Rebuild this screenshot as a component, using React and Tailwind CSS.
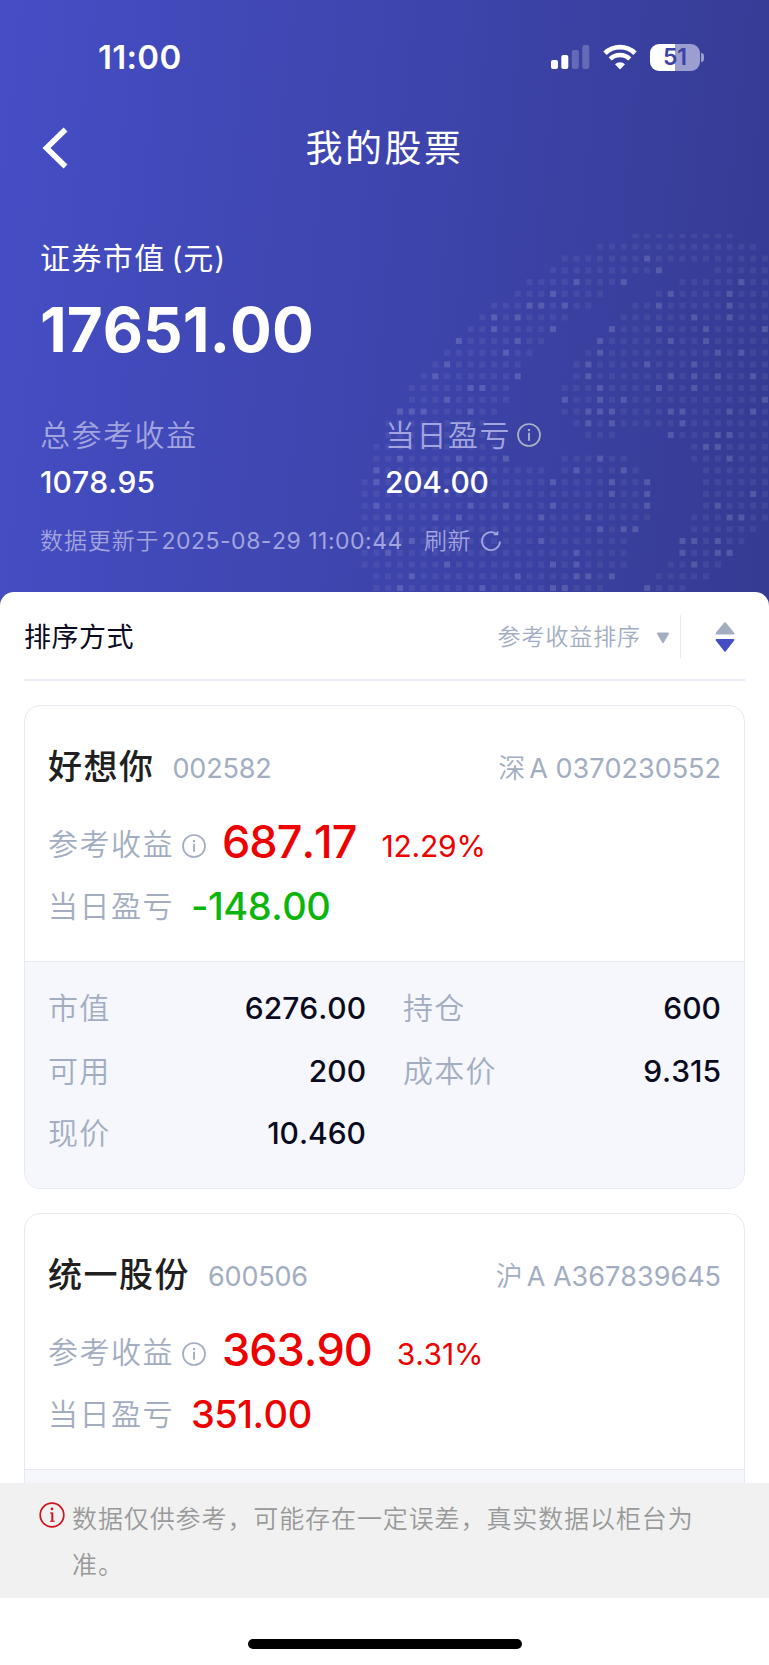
// Each row lists the [from, to] column runs and the highlighted columns.
const DOT_ROWS = [
  { runs: [[23, 31]], lit: [] },
  { runs: [[20, 33]], lit: [] },
  { runs: [[17, 34]], lit: [24] },
  { runs: [[16, 25], [30, 34]], lit: [25] },
  { runs: [[14, 22], [27, 34]], lit: [18, 22, 32] },
  { runs: [[13, 20], [25, 34]], lit: [16, 26, 31] },
  { runs: [[11, 19], [23, 34]], lit: [14, 15, 17, 25, 31] },
  { runs: [[10, 17], [22, 34]], lit: [11, 13, 28, 31] },
  { runs: [[9, 16], [21, 34]], lit: [11, 16, 21, 25, 29, 34] },
  { runs: [[8, 15], [20, 34]], lit: [8, 13, 20, 26, 29] },
  { runs: [[7, 14], [19, 34]], lit: [12, 20, 30, 32] },
  { runs: [[6, 13], [18, 34]], lit: [7, 19, 24, 28] },
  { runs: [[5, 13], [18, 34]], lit: [6, 13, 19, 26, 28, 30, 33] },
  { runs: [[4, 12], [17, 34]], lit: [9, 10, 20, 25, 28] },
  { runs: [[4, 12], [17, 34]], lit: [7, 17, 20, 22, 34] },
  { runs: [[3, 11], [17, 34]], lit: [3, 4, 5, 9, 19, 20, 21, 26, 27, 31, 33] },
  { runs: [[2, 10], [18, 34]], lit: [19, 21, 27] },
  { runs: [[2, 11], [19, 21], [26, 34]], lit: [26, 30, 31] },
  { runs: [[1, 11], [28, 34]], lit: [29, 30] },
  { runs: [[1, 12], [17, 22], [28, 34]], lit: [3, 8, 12, 20, 31] },
  { runs: [[1, 15], [17, 23], [29, 34]], lit: [1, 18, 22] },
  { runs: [[0, 24], [29, 34]], lit: [1, 16, 21, 24] },
  { runs: [[0, 24], [29, 34]], lit: [21, 24, 33] },
  { runs: [[0, 24], [29, 34]], lit: [1, 9, 12, 16, 24, 30] },
  { runs: [[0, 24], [28, 34]], lit: [2, 6, 8, 15, 19, 31, 32] },
  { runs: [[0, 23], [28, 33]], lit: [20, 22, 23] },
  { runs: [[0, 22], [27, 32]], lit: [4, 15, 27, 28, 30] },
  { runs: [[0, 22], [27, 31]], lit: [2, 18, 27, 30, 31] },
  { runs: [[0, 22], [26, 30]], lit: [7, 16, 18, 28] },
  { runs: [[1, 21], [25, 29]], lit: [4, 13, 18, 19, 21] },
  { runs: [[1, 20], [24, 27]], lit: [3, 10, 16, 17, 24] },
];

const STOCKS = [
  {
    name: "好想你",
    code: "002582",
    market: "深",
    account: "A 0370230552",
    profit: "687.17",
    rate: "12.29%",
    today: "-148.00",
    details: [
      ["市值", "6276.00"],
      ["持仓", "600"],
      ["可用", "200"],
      ["成本价", "9.315"],
      ["现价", "10.460"],
    ],
  },
  {
    name: "统一股份",
    code: "600506",
    market: "沪",
    account: "A A367839645",
    profit: "363.90",
    rate: "3.31%",
    today: "351.00",
    details: [],
  },
];

const DotPattern = () => (
  <svg className="absolute right-0 top-[233px]" width="409" height="372" viewBox="0 0 409 372">
    {DOT_ROWS.map((row, r) =>
      row.runs.flatMap(([from, to]) =>
        Array.from({ length: to - from + 1 }, (_, i) => from + i).map((c) => (
          <rect
            key={`${r}-${c}`}
            x={1.7 + c * 11.77}
            y={r === 0 ? 1 : -1 + r * 11.77}
            width="6"
            height={r === 0 ? 4 : 6}
            fill="#fff"
            fillOpacity={row.lit.includes(c) ? 0.15 : 0.06}
          />
        ))
      )
    )}
  </svg>
);

const InfoIcon = ({ className }) => (
  <svg className={className} width="24" height="24" viewBox="0 0 24 24" fill="none" stroke="currentColor">
    <circle cx="12" cy="12" r="11" strokeWidth="1.7" />
    <path d="M12 9.8v8" strokeWidth="1.9" />
    <path d="M12 6v2.1" strokeWidth="2.1" />
  </svg>
);

const NoticeIcon = () => (
  <svg className="mt-[19px] shrink-0" width="26" height="26" viewBox="0 0 26 26" fill="none" stroke="#d0121b">
    <circle cx="13" cy="13" r="11.8" strokeWidth="1.7" />
    <path d="M13.3 10.6v8.6" strokeWidth="2" />
    <path d="M11 11h2.5M10.9 19.2h4.9" strokeWidth="1.1" />
    <circle cx="13" cy="6.9" r="1.3" fill="#d0121b" stroke="none" />
  </svg>
);

const RefreshIcon = () => (
  <svg className="ml-[9px]" width="22" height="22" viewBox="0 0 22 22" fill="none" stroke="currentColor">
    <path d="M20 11.5A9 9 0 1 1 16.6 4" strokeWidth="1.8" />
    <path d="M13 5.2h5.3V0.8z" fill="currentColor" stroke="none" />
  </svg>
);

const StatusIcons = () => (
  <div className="flex items-center">
    <svg width="39" height="26" viewBox="0 0 39 26" fill="#fff">
      <rect x="0" y="16" width="7" height="9" rx="2" />
      <rect x="10.3" y="11" width="7" height="14" rx="2" />
      <rect x="20.8" y="6" width="7" height="19" rx="2" fillOpacity="0.22" />
      <rect x="31.3" y="1" width="7" height="24" rx="2" fillOpacity="0.22" />
    </svg>
    <svg className="ml-[13px]" width="34" height="26" viewBox="0 0 34 26" fill="none" stroke="#fff">
      <path d="M2 9.3a21.5 21.5 0 0 1 30 0" strokeWidth="4.8" />
      <path d="M7.2 15a14 14 0 0 1 19.6 0" strokeWidth="4.4" />
      <path d="M17 25.5l-5-5.2a7.2 7.2 0 0 1 10 0z" fill="#fff" stroke="none" />
    </svg>
    <div className="ml-[13px] flex h-[27px] w-[50px] items-center justify-center rounded-[9px] bg-linear-to-r from-white from-50% to-[#9b9ecf] to-50%">
      <span className="text-[23px] font-semibold leading-none text-[#3c43a5]">51</span>
    </div>
    <div className="ml-[1px] h-[9px] w-[3px] rounded-r-full bg-[#9b9ecf]" />
  </div>
);

const Header = () => (
  <header className="relative h-[606px] shrink-0 bg-[linear-gradient(96deg,#454ec5_0%,#3c43a8_60%,#353b92_100%)] px-10 text-white">
    <DotPattern />
    <div className="relative">
      <div className="flex h-[114px] items-center justify-between pl-[58px] pr-[25px]">
        <span className="text-[33px] font-semibold leading-none tracking-[0.3px]">11:00</span>
        <StatusIcons />
      </div>
      <div className="relative flex h-[68px] items-center justify-center">
        <svg className="absolute left-[1px]" width="28" height="42" viewBox="0 0 28 42" fill="none" stroke="#fff" strokeWidth="5.6">
          <path d="M24.5 2.5L5.5 21l19 18.5" />
        </svg>
        <h1 className="pt-px text-[37px] leading-none tracking-[2.5px]">我的股票</h1>
      </div>
      <div className="mt-[54px] h-[44px] text-[30px] leading-[44px] tracking-[1.4px]">
        证券市值<span className="ml-[6px] tracking-[0.8px]">(元)</span>
      </div>
      <div className="mt-[15px] h-[70px] text-[62px] font-bold leading-[70px]">17651.00</div>
      <div className="mt-12 flex">
        <div className="w-[345px]">
          <div className="h-[44px] text-[30px] font-[350] leading-[44px] tracking-[1.5px] text-[#a2a5df]">总参考收益</div>
          <div className="mt-[5px] h-10 text-[30px] font-medium leading-10 tracking-[0.1px]">1078.95</div>
        </div>
        <div>
          <div className="flex h-[44px] items-center text-[30px] font-[350] leading-[44px] tracking-[1.5px] text-[#a2a5df]">
            当日盈亏
            <InfoIcon className="ml-[6px] text-[#abb2c2]" />
          </div>
          <div className="mt-[5px] h-10 text-[30px] font-medium leading-10 tracking-[-0.3px]">204.00</div>
        </div>
      </div>
      <div className="mt-[22px] flex h-[34px] items-center text-[23px] font-[350] leading-[34px] text-[#a2a5df]">
        <span className="tracking-[0.9px]">数据更新于</span>
        <span className="ml-[2px] font-normal tracking-[0.5px]">2025-08-29 11:00:44</span>
        <span className="ml-[21px] tracking-[0.5px]">刷新</span>
        <RefreshIcon />
      </div>
    </div>
  </header>
);

const SortBar = () => (
  <div className="flex h-[89px] shrink-0 items-center border-b-2 border-[#e9ecf6]">
    <span className="mt-[3px] text-[27px] leading-none tracking-[0.5px] text-[#0a0a20]">排序方式</span>
    <span className="ml-auto mt-[3px] text-[23px] font-[350] leading-none tracking-[0.9px] text-[#a3adc2]">参考收益排序</span>
    <svg className="ml-[15px] mt-1" width="14" height="12" viewBox="0 0 14 12">
      <path d="M2 1.5h10L7 10z" fill="#a3adc2" stroke="#a3adc2" strokeWidth="2" strokeLinejoin="round" />
    </svg>
    <div className="ml-[10px] mt-0.5 h-[43px] w-px bg-[#e8eaf2]" />
    <svg className="ml-[34px] mr-[10px] mt-0.5" width="20" height="30" viewBox="0 0 20 30" strokeWidth="2" strokeLinejoin="round">
      <path d="M10 1.2l8.4 10.3H1.6z" fill="#a3adc2" stroke="#a3adc2" />
      <path d="M1.6 18h16.8L10 28.6z" fill="#444ec4" stroke="#444ec4" />
    </svg>
  </div>
);

function StockCard({ stock }) {
  const todayColor = stock.today.startsWith("-") ? "text-[#0bb50b]" : "text-[#ee0000]";

  return (
    <section className="h-[484px] shrink-0 overflow-hidden rounded-[16px] border-[1.5px] border-[#e6e9f0] bg-white">
      <div className="h-[255px] px-[23px] pt-[32px]">
        <div className="flex h-[56px] items-center text-[27px] leading-none text-[#a3adc2]">
          <h2 className="pt-0.5 text-[34px] font-medium tracking-[1.5px] text-[#202020]">{stock.name}</h2>
          <span className="ml-[18px] mt-[4px] tracking-[-0.2px]">{stock.code}</span>
          <span className="ml-auto mt-[4px] font-[350]">{stock.market}</span>
          <span className="ml-[4px] mt-[4px]">{stock.account}</span>
        </div>
        <div className="mt-[19px] flex h-[56px] items-center leading-none">
          <span className="mt-[5px] text-[30px] font-[350] tracking-[1.5px] text-[#a3adc2]">参考收益</span>
          <InfoIcon className="ml-[8px] mt-[9px] text-[#a3adc2]" />
          <span className="ml-[16px] text-[45px] font-medium tracking-[-1px] text-[#ee0000]">{stock.profit}</span>
          <span className="ml-[25px] mt-[9px] text-[30px] tracking-[-0.2px] text-[#ee0000]">{stock.rate}</span>
        </div>
        <div className="mt-[8px] flex h-[56px] items-center leading-none">
          <span className="mt-[2px] text-[30px] font-[350] tracking-[1.5px] text-[#a3adc2]">当日盈亏</span>
          <span className={`ml-[17px] mt-px text-[38px] font-medium tracking-[-0.5px] ${todayColor}`}>{stock.today}</span>
        </div>
      </div>
      <div className="grid h-full auto-rows-[62.5px] grid-cols-2 gap-x-[37px] border-t-[1.5px] border-[#e6e9f0] bg-[#f5f7fc] px-[23px] pt-[15px]">
        {stock.details.map(([label, value]) => (
          <div key={label} className="flex items-center justify-between leading-none">
            <span className="text-[30px] font-[350] tracking-[1.3px] text-[#a3adc2]">{label}</span>
            <span className="text-[30px] font-medium text-[#0a0a20]">{value}</span>
          </div>
        ))}
      </div>
    </section>
  );
}

export default function App() {
  return (
    <div className="flex h-[1665px] w-[769px] flex-col overflow-hidden bg-white font-['Inter','Noto_Sans_CJK_SC',sans-serif] [font-kerning:none]">
      <Header />
      <main className="relative -mt-[14px] flex min-h-0 flex-1 flex-col overflow-hidden rounded-t-[14px] bg-white px-6">
        <SortBar />
        <div className="mt-6 flex flex-col gap-6">
          {STOCKS.map((stock) => (
            <StockCard key={stock.code} stock={stock} />
          ))}
        </div>
      </main>
      <footer className="relative shrink-0">
        <div className="flex h-[115px] bg-[#f1f1f1] pl-[39px] pr-[60px]">
          <NoticeIcon />
          <p className="ml-[7px] mt-[13px] text-[25px] font-[350] leading-[46px] tracking-[0.9px] text-[#999]">
            数据仅供参考，可能存在一定误差，真实数据以柜台为准。
          </p>
        </div>
        <div className="flex h-[67px] justify-center pt-[41px]">
          <div className="h-[10px] w-[274px] rounded-full bg-black" />
        </div>
      </footer>
    </div>
  );
}
